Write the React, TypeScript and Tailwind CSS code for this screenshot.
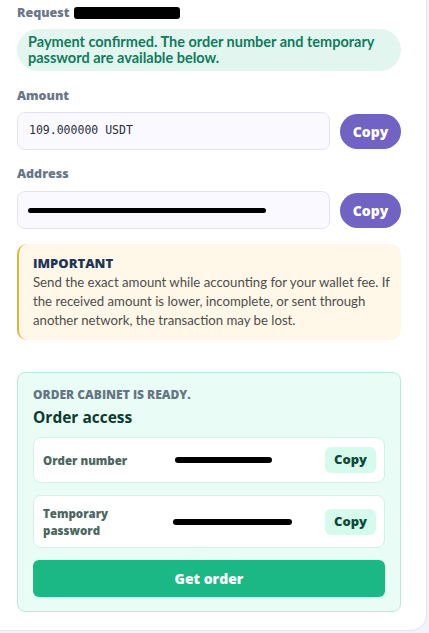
import { ReactNode } from "react"

const SANS = "font-['Open_Sans','Noto_Sans',sans-serif]"
const BODY = "font-['Lato','Noto_Sans',sans-serif]"

// Marker scribble that hides private values in the capture
function Redacted({ className }: { className: string }) {
  return <span className={`block rounded-[3px] bg-black ${className}`} />
}

function FieldLabel({ children }: { children: ReactNode }) {
  return <div className="text-[12.5px] font-extrabold leading-4 text-[#68768a]">{children}</div>
}

function CopyPill() {
  return (
    <button
      type="button"
      className="flex h-[35px] w-[61px] shrink-0 items-center justify-center rounded-full bg-[#7063c3] text-[14px] font-extrabold text-white"
    >
      Copy
    </button>
  )
}

function AccessRow({ label, children, tall }: { label: ReactNode; children: ReactNode; tall?: boolean }) {
  return (
    <div
      className={`flex items-center rounded-lg border border-[#d3f1e6] bg-white pl-[9px] pr-[8px] ${tall ? "h-[53px]" : "h-[46px]"}`}
    >
      <div className="w-[121px] shrink-0 text-[11.5px] font-extrabold leading-[17px] text-[#4c675f]">{label}</div>
      <div className="flex-1">{children}</div>
      <button
        type="button"
        className="flex h-[26px] w-[51px] items-center justify-center rounded-md bg-[#d6fbec] text-[13px] font-extrabold text-[#0e4a3a]"
      >
        Copy
      </button>
    </div>
  )
}

export default function App() {
  return (
    <div className={`min-h-[633px] bg-[#f4f3fc] ${SANS}`}>
      <div className="h-[631px] w-[427px] rounded-br-2xl border-r border-b border-[#e6e3f6] bg-white px-[17px] pt-[5px]">
        <div className="w-[384px]">
          <div className="flex items-center gap-[4px] text-[12.5px] font-extrabold leading-4 text-[#68768a]">
            Request
            <Redacted className="h-[12px] w-[106px]" />
          </div>

          <div
            className={`mt-[8px] flex h-[42px] items-center rounded-[21px] bg-[#e2f6ef] px-[11px] text-[14.5px] font-bold leading-[16px] text-[#137a5d] ${BODY}`}
          >
            Payment confirmed. The order number and temporary password are available below.
          </div>

          <div className="mt-[17px]">
            <FieldLabel>Amount</FieldLabel>
            <div className="mt-[8px] flex items-center gap-[10px]">
              <div className="flex h-[38px] w-[314px] items-center rounded-lg border border-[#e5e2f6] bg-[#faf9ff] px-[11px] font-['DejaVu_Sans_Mono',monospace] text-[11.5px] text-[#2a2f3a]">
                109.000000 USDT
              </div>
              <CopyPill />
            </div>
          </div>

          <div className="mt-[16px]">
            <FieldLabel>Address</FieldLabel>
            <div className="mt-[9px] flex items-center gap-[10px]">
              <div className="flex h-[38px] w-[314px] items-center rounded-lg border border-[#e5e2f6] bg-[#faf9ff] px-[10px]">
                <Redacted className="h-[5px] w-[238px]" />
              </div>
              <CopyPill />
            </div>
          </div>

          <div className="mt-[15px] h-[96px] rounded-[10px] border-l-2 border-[#e2b13c] bg-[#fff8e8] pl-[14px] pr-[8px] pt-[10px]">
            <div className="text-[13px] font-extrabold leading-[18px] text-[#1d3557]">IMPORTANT</div>
            <p className={`mt-[1px] text-[13.2px] leading-[19px] text-[#4d4d4d] ${BODY}`}>
              Send the exact amount while accounting for your wallet fee. If the received amount is lower, incomplete, or sent through another network, the transaction may be lost.
            </p>
          </div>

          <div className="mt-[32px] rounded-lg border border-[#b7ead9] bg-[#e9fdf6] px-[15px] pt-[14px] pb-[14px]">
            <div className="text-[12px] font-extrabold leading-4 text-[#667585]">ORDER CABINET IS READY.</div>
            <div className="mt-[4px] text-[15.5px] font-bold leading-5 text-[#0c3a2f]">Order access</div>
            <div className="mt-[10px] flex flex-col gap-[12px]">
              <AccessRow label="Order number">
                <Redacted className="ml-[11px] h-[6px] w-[97px]" />
              </AccessRow>
              <AccessRow
                tall
                label={
                  <>
                    Temporary
                    <br />
                    password
                  </>
                }
              >
                <Redacted className="ml-[9px] h-[6px] w-[119px]" />
              </AccessRow>
              <button
                type="button"
                className="flex h-[37px] items-center justify-center rounded-md bg-[#1bb886] text-[14px] font-extrabold text-white"
              >
                Get order
              </button>
            </div>
          </div>
        </div>
      </div>
    </div>
  )
}
